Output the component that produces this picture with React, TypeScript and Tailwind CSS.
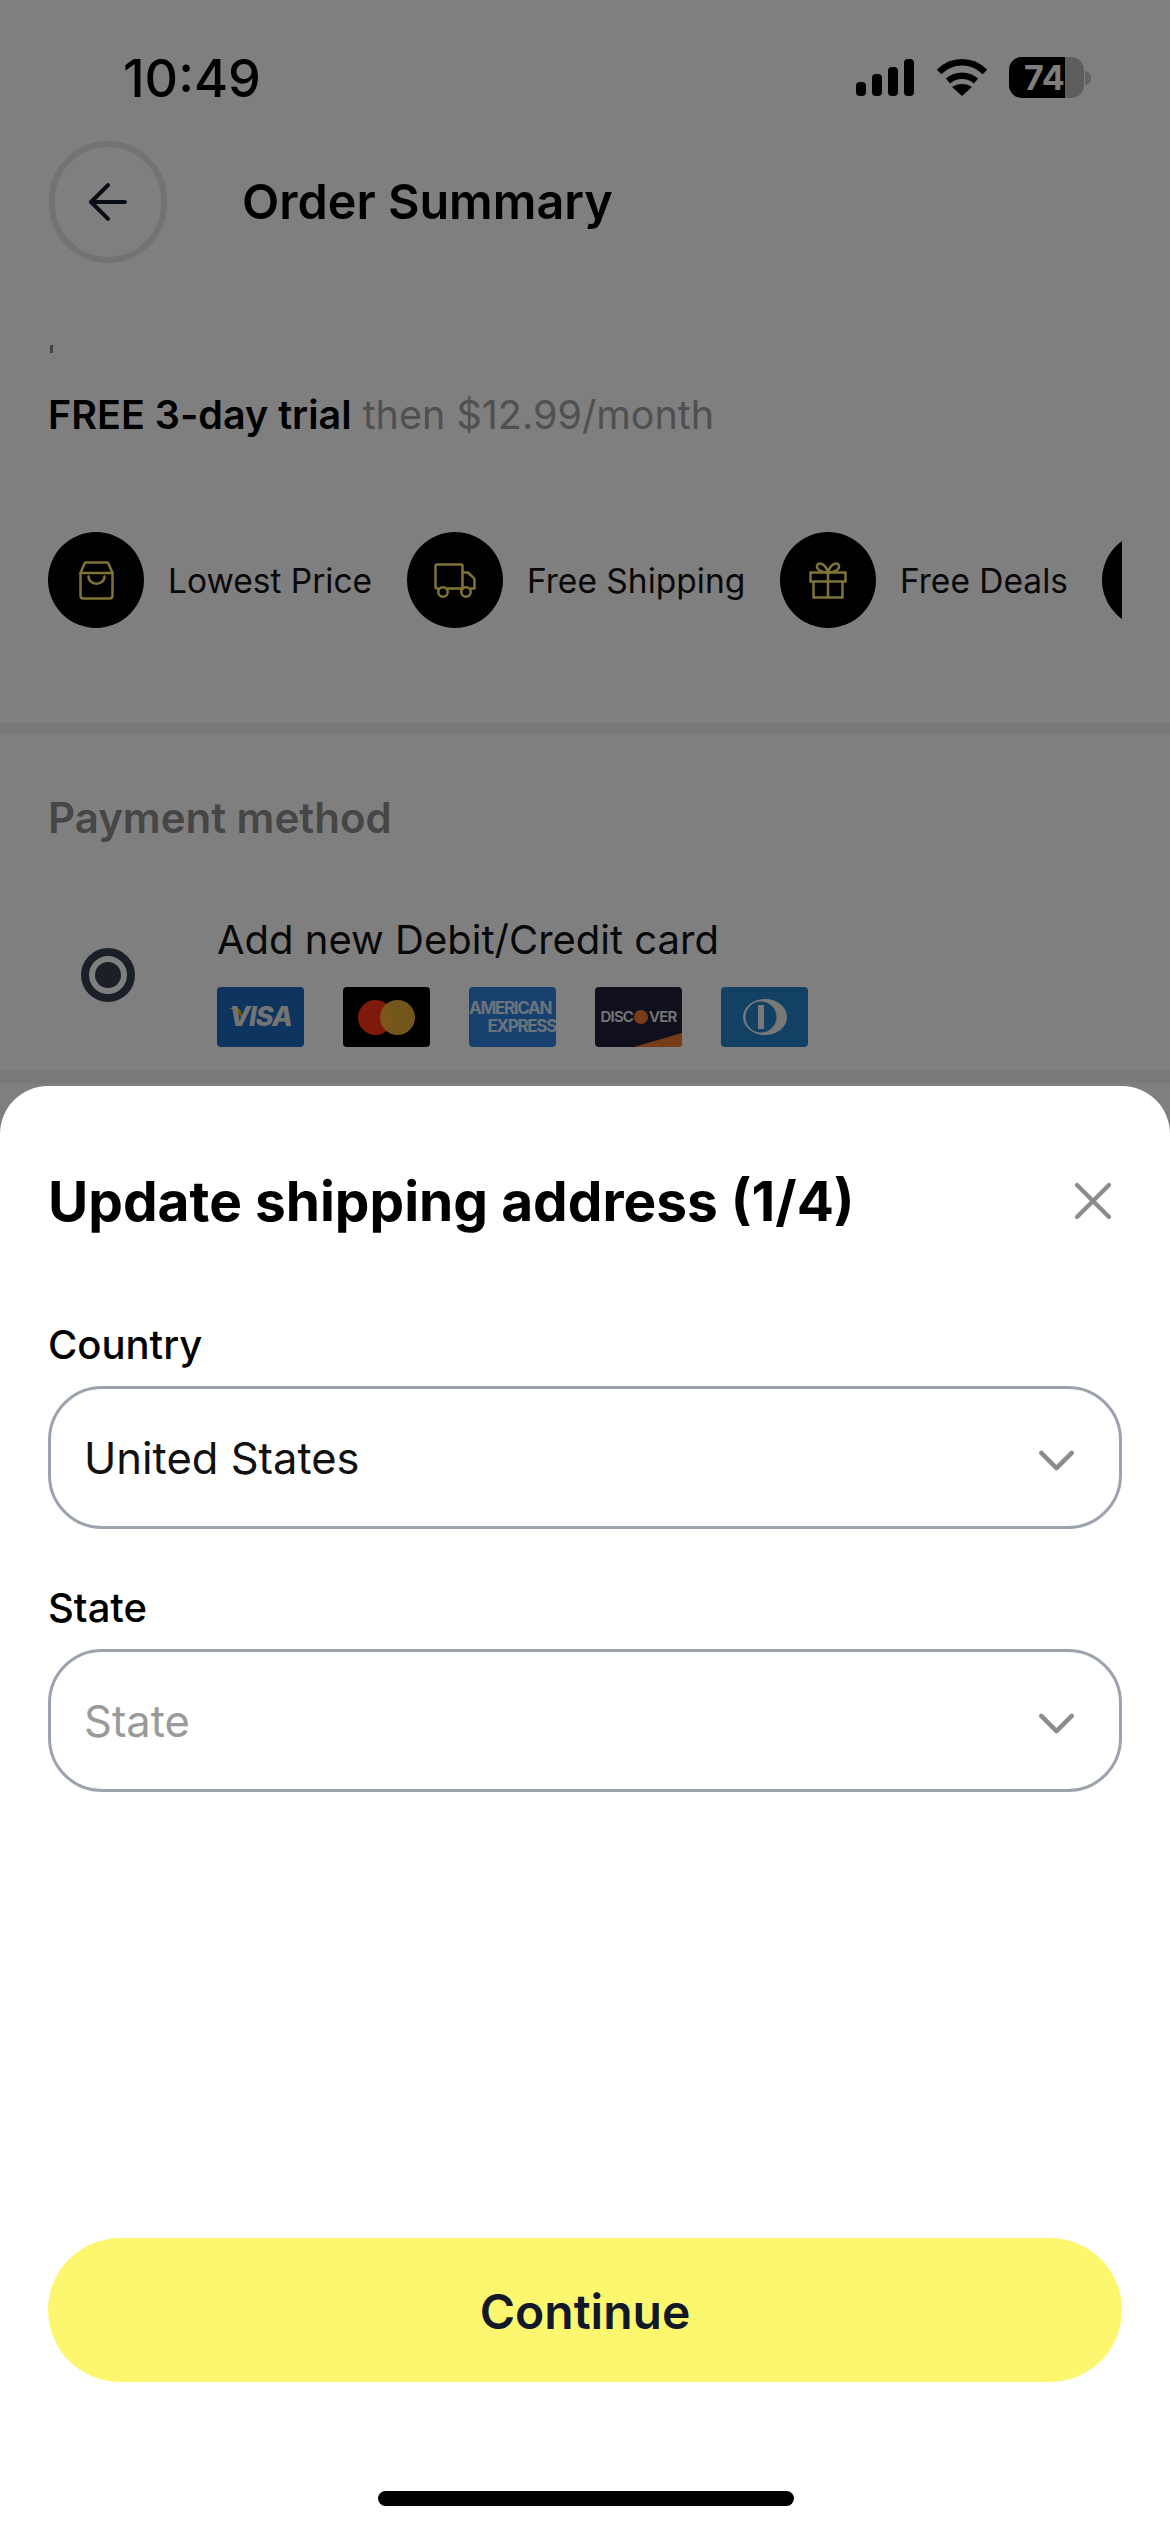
import { ArrowLeft, ChevronDown, X } from "lucide-react"

const features = [
  { label: "Lowest Price", icon: "bag", width: "w-[359px]" },
  { label: "Free Shipping", icon: "truck", width: "w-[373px]" },
  { label: "Free Deals", icon: "gift", width: "w-[322px]" },
]

function FeatureIcon({ icon }: { icon: string }) {
  if (icon === "bag") {
    return (
      <svg viewBox="0 0 35 39" className="h-[39px] w-[35px]" fill="none" stroke="#ffe96b" strokeWidth="2.5" strokeLinejoin="round" strokeLinecap="round">
        <path d="M1.5 12 5.5 2.5a1.5 1.5 0 0 1 1.4-1h21.2a1.5 1.5 0 0 1 1.4 1l4 9.500v23a3 3 0 0 1-3 2.500H4.500a3 3 0 0 1-3-2.500Z" />
        <path d="M1.5 12h32" />
        <path d="M9.500 15.500c0 9.500 16 9.500 16 0" />
      </svg>
    )
  }
  if (icon === "truck") {
    return (
      <svg viewBox="0 0 42 35" className="h-[35px] w-[42px]" fill="none" stroke="#ffe96b" strokeWidth="2.5" strokeLinejoin="round" strokeLinecap="round">
        <path d="M4 25.500H3A1.500 1.500 0 0 1 1.500 24V3A1.500 1.500 0 0 1 3 1.500h24A1.500 1.500 0 0 1 28.500 3v22.500H14" />
        <path d="M28.500 9.500H34l5.800 5.600a2 2 0 0 1 .7 1.500v8.900H37M28.500 25.500H27" />
        <circle cx="9" cy="29" r="4.700" />
        <circle cx="32" cy="29" r="4.700" />
      </svg>
    )
  }
  return (
    <svg viewBox="0 0 38 38" className="h-[38px] w-[38px]" fill="none" stroke="#ffe96b" strokeWidth="2.5" strokeLinejoin="round" strokeLinecap="round">
      <path d="M1.500 11.500h35v9h-35ZM4.500 20.500v16h29v-16M19 11.500v25" />
      <path d="M19 11.500c-2-8-10-12-11-6.500-.5 3.500 4 6.500 11 6.500Zm0 0c2-8 10-12 11-6.500.5 3.500-4 6.500-11 6.500Z" />
    </svg>
  )
}

function Cards() {
  return (
    <div className="mt-[23px] flex gap-[39px]">
      <div className="relative flex h-[60px] w-[87px] items-center justify-center overflow-hidden rounded-[4px] bg-[#1c6ac0]">
        <svg viewBox="0 0 16 12" className="absolute left-[11px] top-[21px] h-[12px] w-[16px]">
          <path d="M0 0h9c2 0 3 1 4 4l2 8C12 6 7 2 0 0Z" fill="#f7b600" />
        </svg>
        <span className="relative text-[27px] font-extrabold italic tracking-[-1px] text-[#e8e8e8]">VISA</span>
      </div>
      <div className="flex h-[60px] w-[87px] items-center justify-center rounded-[4px] bg-black">
        <svg viewBox="0 0 57 35" className="h-[35px] w-[57px]">
          <circle cx="17.500" cy="17.500" r="17.500" fill="#ff3318" />
          <circle cx="39.500" cy="17.500" r="17.500" fill="#f8b83c" fillOpacity="0.92" />
        </svg>
      </div>
      <div className="flex h-[60px] w-[87px] flex-col items-end justify-center overflow-hidden rounded-[4px] bg-[#2f80dc] text-[17px] font-bold leading-[18px] tracking-[-1.300px] text-[#d6e6f8]">
        <span className="w-full text-left">AMERICAN</span>
        <span>EXPRESS</span>
      </div>
      <div className="relative flex h-[60px] w-[87px] items-center justify-center overflow-hidden rounded-[4px] bg-[#1f1f3a]">
        <div className="absolute bottom-0 right-0 h-0 w-0 border-b-[14px] border-l-[48px] border-b-[#ee7a30] border-l-transparent" />
        <span className="relative flex items-center text-[15px] font-semibold tracking-[-0.800px] text-[#ededed]">
          DISC
          <span className="mx-[1px] h-[14px] w-[14px] rounded-full bg-[#ee7a30] text-center text-[10px] leading-[14px] text-transparent">O</span>
          VER
        </span>
      </div>
      <div className="flex h-[60px] w-[87px] items-center justify-center rounded-[4px] bg-[#2582c8]">
        <svg viewBox="0 0 44 36" className="h-[36px] w-[44px]">
          <ellipse cx="22" cy="18" rx="22" ry="18" fill="#f0f0f0" />
          <circle cx="18" cy="18" r="15.500" fill="#2582c8" />
          <rect x="15" y="6" width="6" height="24" fill="#f0f0f0" />
        </svg>
      </div>
    </div>
  )
}

function SelectField({ label, value, placeholder }: { label: string; value: string; placeholder?: boolean }) {
  return (
    <div>
      <label className="block text-[40px] font-medium leading-[48px] text-black">{label}</label>
      <div className="mt-[17px] flex h-[143px] items-center justify-between rounded-[54px] border-[3px] border-[#9ca3af] pl-[33px] pr-[32px]">
        <span className={placeholder ? "pt-[3px] text-[43.500px] text-[#9a9a9a]" : "pt-[3px] text-[43.500px] text-[#111111]"}>{value}</span>
        <ChevronDown className="mt-[6px] h-[61px] w-[61px] text-[#8c8c8c]" strokeWidth={1.800} />
      </div>
    </div>
  )
}

export default function App() {
  return (
    <div className="relative h-[2532px] w-[1170px] overflow-hidden bg-white font-['Inter',sans-serif]">
      {/* status bar */}
      <div className="flex h-[141px] items-start justify-between pl-[123px] pr-[79px] pt-[48px]">
        <span className="pt-[2px] text-[52px] font-medium leading-[58px] text-black">10:49</span>
        <div className="mt-[9px] flex items-center">
          <svg viewBox="0 0 58 37" className="h-[37px] w-[58px]" fill="black">
            <rect x="0" y="23" width="10" height="14" rx="4" />
            <rect x="16" y="15" width="10" height="22" rx="4" />
            <rect x="32" y="8" width="10" height="29" rx="4" />
            <rect x="48" y="0" width="10" height="37" rx="4" />
          </svg>
          <svg viewBox="0 0 50 37" className="ml-[23px] h-[37px] w-[50px]" fill="none" stroke="black" strokeWidth="6.500">
            <path d="M2 13C15 0 35 0 48 13" />
            <path d="M11 22c8-7 20-7 28 0" />
            <path d="M25 37 15 28c6-4 14-4 20 0Z" fill="black" stroke="none" />
          </svg>
          <div className="relative ml-[22px] flex h-[41px] w-[75px] items-center overflow-hidden rounded-[13px] bg-[#bcbcbc] pl-[15px]">
            <div className="absolute inset-y-0 left-0 w-[56px] bg-black" />
            <span className="relative text-[34px] font-bold leading-none text-white">74</span>
          </div>
          <div className="ml-[1px] h-[14px] w-[6px] rounded-r-full bg-[#c8c8c8]" />
        </div>
      </div>

      {/* header */}
      <div className="flex items-center px-[49px]">
        <div className="flex h-[122px] w-[118px] items-center justify-center rounded-full border-[6px] border-[#e6e6e6]">
          <ArrowLeft className="h-[58px] w-[58px] text-[#111827]" strokeWidth={1.700} />
        </div>
        <h1 className="ml-[75px] text-[48.500px] font-semibold leading-[58px] text-black">Order Summary</h1>
      </div>

      <div className="ml-[50px] mt-[82px] h-[8px] w-[3px] bg-[#888888]" />
      <p className="ml-[48px] mt-[38px] text-[39.500px] leading-[48px] text-[#a0a0a0]">
        <span className="font-semibold text-black">FREE 3-day trial</span> then $12.99/month
      </p>

      {/* feature scroller */}
      <div className="ml-[48px] mt-[93px] flex h-[96px] w-[1074px] overflow-hidden">
        {features.map((f) => (
          <div key={f.label} className={`flex shrink-0 items-center ${f.width}`}>
            <div className="flex h-[96px] w-[96px] shrink-0 items-center justify-center rounded-full bg-black">
              <FeatureIcon icon={f.icon} />
            </div>
            <span className="ml-[24px] whitespace-nowrap pt-[2px] text-[33.500px] text-[#111111]">{f.label}</span>
          </div>
        ))}
        <div className="h-[96px] w-[96px] shrink-0 rounded-full bg-black" />
      </div>

      <div className="mt-[95px] h-[12px] bg-[#f2f2f2]" />

      {/* payment */}
      <h2 className="ml-[48px] mt-[58px] text-[42px] font-semibold leading-[50px] text-[#8c8c8c]">Payment method</h2>
      <div className="mt-[73px] flex items-center pl-[81px]">
        <div className="mb-[13px] flex h-[54px] w-[54px] items-center justify-center rounded-full border-[8px] border-[#374151]">
          <div className="h-[26px] w-[26px] rounded-full bg-[#374151]" />
        </div>
        <div className="ml-[82px]">
          <p className="text-[40px] leading-[48px] text-[#111111]">Add new Debit/Credit card</p>
          <Cards />
        </div>
      </div>
      <div className="mt-[24px] h-[12px] bg-[#f2f2f2]" />

      {/* dim layer + bottom sheet */}
      <div className="absolute inset-0 bg-black/50" />
      <div className="absolute inset-x-0 bottom-0 flex h-[1446px] flex-col rounded-t-[48px] bg-white px-[48px]">
        <div className="mt-[81px] flex items-center justify-between">
          <h3 className="text-[55px] font-bold leading-[68px] text-black">Update shipping address (1/4)</h3>
          <X className="-mr-[3px] h-[64px] w-[64px] text-[#8c8c8c]" strokeWidth={1.600} />
        </div>
        <div className="mt-[86px]">
          <SelectField label="Country" value="United States" />
        </div>
        <div className="mt-[55px]">
          <SelectField label="State" value="State" placeholder />
        </div>
        <button className="mt-auto mb-[150px] h-[144px] rounded-full bg-[#fdf76f] pt-[4px] text-[48px] font-semibold text-[#111827]">
          Continue
        </button>
        <div className="absolute bottom-[26px] left-[378px] h-[15px] w-[416px] rounded-full bg-black" />
      </div>
    </div>
  )
}
